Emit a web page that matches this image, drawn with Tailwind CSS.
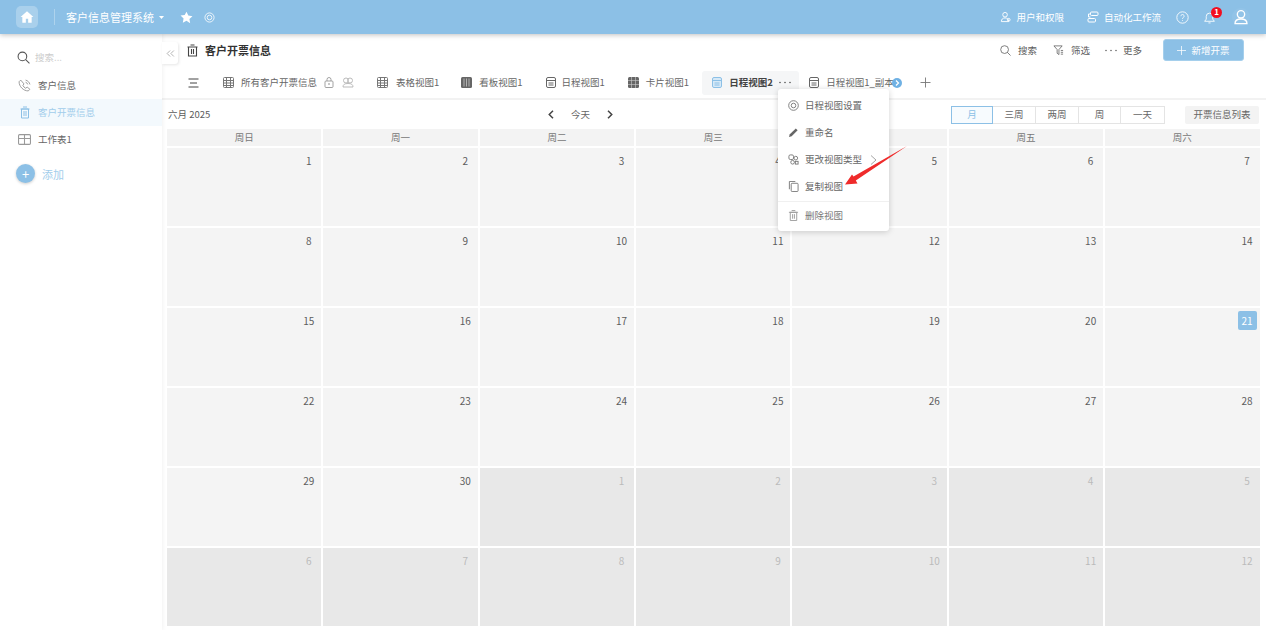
<!DOCTYPE html>
<html lang="zh-CN">
<head>
<meta charset="UTF-8">
<title>客户开票信息</title>
<script src="https://cdn.jsdelivr.net/npm/@tailwindcss/browser@4"></script>
</head>
<body class="h-[630px] w-[1266px] overflow-hidden whitespace-nowrap bg-white font-['Noto_Sans_CJK_SC','Noto_Sans',sans-serif] text-[9.5px] text-[#5c5c5c]">

<!-- Top bar -->
<header class="relative z-20 flex h-[34px] items-center justify-between bg-[#8cc0e6] text-white shadow-[0_1px_5px_rgba(0,0,0,0.25)]">
  <div class="flex items-center pl-4">
    <div class="flex h-[22px] w-[22px] items-center justify-center rounded-[5px] bg-white/25">
      <svg class="h-[14px] w-[14px]" viewBox="0 0 24 24" fill="white"><path d="M12 2 1 12h3v10h6v-7h4v7h6V12h3z"/></svg>
    </div>
    <div class="ml-[16px] mr-[11px] h-4 w-px bg-white/30"></div>
    <span class="text-[11px]">客户信息管理系统</span>
    <svg class="ml-[5px] h-[3px] w-[5px]" viewBox="0 0 10 6" fill="white"><path d="M0 0h10L5 6z"/></svg>
    <svg class="ml-[16px] h-[13px] w-[13px]" viewBox="0 0 24 24" fill="white"><path d="m12 1.500 3.300 7 7.700 1-5.600 5.300 1.400 7.700L12 18l-6.800 3.500 1.400-7.700L1 8.500l7.700-1z"/></svg>
    <svg class="ml-[11px] h-[11px] w-[11px]" viewBox="0 0 24 24" fill="none" stroke="white" stroke-width="2" opacity=".9"><circle cx="12" cy="12" r="10"/><circle cx="12" cy="12" r="5"/></svg>
  </div>
  <div class="flex items-center pr-[16px]">
    <svg class="h-[12px] w-[11px]" viewBox="0 0 24 24" fill="none" stroke="white" stroke-width="2"><circle cx="11" cy="7" r="5"/><path d="M3 22c0-5 3-8 8-8s8 3 8 8z"/><circle cx="19" cy="18" r="3"/></svg>
    <span class="ml-[5px]">用户和权限</span>
    <svg class="ml-[23px] h-[12px] w-[12px]" viewBox="0 0 24 24" fill="none" stroke="white" stroke-width="2"><rect x="7" y="2" width="15" height="7" rx="2"/><rect x="2" y="15" width="15" height="7" rx="2"/><path d="M7 6H3v6h4"/></svg>
    <span class="ml-[5px]">自动化工作流</span>
    <svg class="ml-[15px] h-[13px] w-[13px]" viewBox="0 0 24 24" fill="none" stroke="white" stroke-width="1.600"><circle cx="12" cy="12" r="10.500"/><path d="M9 9.500a3 3 0 1 1 4.500 2.600c-1 .6-1.500 1.200-1.500 2.400M12 17v1.500"/></svg>
    <div class="relative ml-[14px] h-[13px] w-[13px]">
      <svg class="h-[13px] w-[13px]" viewBox="0 0 24 24" fill="none" stroke="white" stroke-width="1.600"><path d="M3 19h18l-3-4V10a6 6 0 0 0-12 0v5zM10 22h4"/></svg>
      <span class="absolute -top-[4px] left-[8px] flex h-[11px] w-[11px] items-center justify-center rounded-full bg-[#f20d1f] text-[8px] font-bold leading-none">1</span>
    </div>
    <div class="ml-[16px] flex h-[18px] w-[18px] items-center justify-center rounded-full bg-white/5">
      <svg class="h-[16px] w-[16px]" viewBox="0 0 24 24" fill="none" stroke="white" stroke-width="2"><circle cx="12" cy="8" r="5.500"/><path d="M3 22c0-5 3-7 9-7s9 2 9 7z"/></svg>
    </div>
  </div>
</header>

<div class="flex h-[596px]">
  <!-- Sidebar -->
  <aside class="relative z-10 w-[162px] shrink-0 bg-white shadow-[0_0_5px_rgba(0,0,0,0.08)]">
    <div class="flex h-[38px] items-center pl-[17px] pt-[8px]">
      <svg class="h-[13px] w-[13px]" viewBox="0 0 24 24" fill="none" stroke="#555" stroke-width="2"><circle cx="10" cy="10" r="8"/><path d="m16 16 7 7"/></svg>
      <span class="ml-[5px] text-[#ccc]">搜索...</span>
    </div>
    <div class="flex h-[27px] items-center pl-[18px] text-[#666]">
      <svg class="h-[13px] w-[13px]" viewBox="0 0 24 24" fill="none" stroke="#888" stroke-width="1.500"><path d="M5 2 2 5c0 9 8 17 17 17l3-3-5-4-3 2c-2-1-4-3-5-5l2-3zM14 2c4 1 7 4 8 8M14 6c2 .5 3.500 2 4 4"/></svg>
      <span class="ml-[7px]">客户信息</span>
    </div>
    <div class="flex h-[27px] items-center bg-[#f3f9fd] pl-[19px] text-[#a2cdeb]">
      <svg class="h-[13px] w-[12px]" viewBox="0 0 24 24" fill="none" stroke="#8cc0e6" stroke-width="2"><path d="M3 5h18M8 1h8M5 5h14v18H5zM10 9v10M14 9v10"/></svg>
      <span class="ml-[7px]">客户开票信息</span>
    </div>
    <div class="flex h-[27px] items-center pl-[18px] text-[#666]">
      <svg class="h-[13px] w-[13px]" viewBox="0 0 24 24" fill="none" stroke="#999" stroke-width="2"><rect x="1" y="3" width="22" height="18" rx="2"/><path d="M1 10h22M12 3v18"/></svg>
      <span class="ml-[7px]">工作表1</span>
    </div>
    <div class="mt-[11px] flex items-center pl-[16px]">
      <div class="flex h-[19px] w-[19px] items-center justify-center rounded-full bg-[#8cc0e6] text-[13px] leading-none text-white shadow-[0_1px_3px_rgba(0,0,0,0.2)]">+</div>
      <span class="ml-[7px] pt-[1px] text-[11px] text-[#a2cdeb]">添加</span>
    </div>
    <button class="absolute -right-[16px] top-[8px] flex h-[22px] w-[16px] items-center justify-center rounded-r-[3px] bg-white text-[#999] shadow-[1px_1px_3px_rgba(0,0,0,0.1)]">
      <svg class="h-[9px] w-[9px]" viewBox="0 0 24 24" fill="none" stroke="#999" stroke-width="2"><path d="m11 4-8 8 8 8M21 4l-8 8 8 8"/></svg>
    </button>
  </aside>

  <main class="relative min-w-0 flex-1">
    <!-- Title row -->
    <div class="flex h-[32px] items-center justify-between pl-[25px] pr-[22px]">
      <div class="flex items-center">
        <svg class="h-[13px] w-[11px]" viewBox="0 0 22 24" fill="none" stroke="#444" stroke-width="2.200"><path d="M1 5h20M7 1h8M3 5h16v18H3zM9 9v10M13 9v10"/></svg>
        <span class="ml-[7px] text-[11px] font-bold text-[#333]">客户开票信息</span>
      </div>
      <div class="flex items-center">
        <svg class="h-[11px] w-[11px]" viewBox="0 0 24 24" fill="none" stroke="#666" stroke-width="1.800"><circle cx="10" cy="10" r="8.500"/><path d="m16 16 7 7"/></svg>
        <span class="ml-[7px]">搜索</span>
        <svg class="ml-[16px] h-[12px] w-[11px]" viewBox="0 0 24 24" fill="none" stroke="#666" stroke-width="1.800"><path d="M2 3h18l-7 8v11l-4-3v-8zM17 13h5M17 17h5M17 21h5"/></svg>
        <span class="ml-[7px]">筛选</span>
        <svg class="ml-[15px] h-[3px] w-[12px]" viewBox="0 0 12 3" fill="#666"><circle cx="1" cy="1.500" r=".8"/><circle cx="6" cy="1.500" r=".8"/><circle cx="11" cy="1.500" r=".8"/></svg>
        <span class="ml-[6px]">更多</span>
        <button class="ml-[21px] flex h-[22px] w-[81px] items-center justify-center rounded-[3px] border border-[#a5cfec] bg-[#8cc0e6] text-white">
          <svg class="h-[9px] w-[9px]" viewBox="0 0 18 18" stroke="white" stroke-width="1.500"><path d="M9 0v18M0 9h18"/></svg><span class="ml-[5px]">新增开票</span>
        </button>
      </div>
    </div>

    <!-- View tabs -->
    <div class="relative flex h-[34px] items-center border-b-2 border-[#f2f2f2] pl-[26px] pt-[1px] text-[#666]">
      <svg class="h-[10px] w-[11px]" viewBox="0 0 22 20" fill="none" stroke="#444" stroke-width="2"><path d="M1 2h20M4 10h14M1 18h20"/></svg>
      <svg class="ml-[24px] h-[11px] w-[11px]" viewBox="0 0 22 22" fill="none" stroke="#777" stroke-width="2"><rect x="1" y="1" width="20" height="20" rx="2"/><path d="M1 7h20M1 12h20M1 17h20M7 1v20M15 1v20"/></svg>
      <span class="ml-[7px]">所有客户开票信息</span>
      <svg class="ml-[7px] h-[11px] w-[10px]" viewBox="0 0 20 22" fill="none" stroke="#999" stroke-width="1.800"><rect x="2" y="8" width="16" height="13" rx="2"/><path d="M6 8V5a4 4 0 0 1 8 0v3"/><circle cx="10" cy="14" r="1"/></svg>
      <svg class="ml-[8px] h-[11px] w-[12px]" viewBox="0 0 24 22" fill="none" stroke="#bbb" stroke-width="2"><circle cx="8" cy="7" r="5"/><circle cx="16" cy="7" r="5"/><path d="M2 20c0-5 3-7 10-7s10 2 10 7z"/></svg>
      <svg class="ml-[23px] h-[11px] w-[11px]" viewBox="0 0 22 22" fill="none" stroke="#777" stroke-width="2"><rect x="1" y="1" width="20" height="20" rx="2"/><path d="M1 7h20M1 12h20M1 17h20M7 1v20M15 1v20"/></svg>
      <span class="ml-[8px]">表格视图1</span>
      <svg class="ml-[22px] h-[11px] w-[11px]" viewBox="0 0 22 22"><rect width="22" height="22" rx="3" fill="#666"/><path d="M6 3v16M11 3v16M16 3v16" stroke="#ccc" stroke-width="1.500"/></svg>
      <span class="ml-[7px]">看板视图1</span>
      <svg class="ml-[23px] h-[11px] w-[10px]" viewBox="0 0 20 22" fill="none" stroke="#666" stroke-width="2"><rect x="1" y="1" width="18" height="20" rx="3"/><path d="M1 7h18M5 12h10M5 16h10"/></svg>
      <span class="ml-[6px]">日程视图1</span>
      <svg class="ml-[23px] h-[11px] w-[11px]" viewBox="0 0 22 22"><rect width="22" height="22" rx="3" fill="#666"/><path d="M7 0v22M15 0v22M0 7h22M0 15h22" stroke="#ccc" stroke-width="1.200"/></svg>
      <span class="ml-[7px]">卡片视图1</span>
      <div class="ml-[13px] flex h-[24px] w-[97px] shrink-0 items-center rounded-[3px] bg-[#f5f6f7] pl-[10px]">
        <svg class="h-[11px] w-[10px] shrink-0" viewBox="0 0 20 22" fill="#d6e9f7" stroke="#8cc0e6" stroke-width="2"><rect x="1" y="1" width="18" height="20" rx="3"/><path d="M1 7h18M5 12h10M5 16h10"/></svg>
        <span class="ml-[7px] font-bold text-[#444]">日程视图2</span>
        <svg class="ml-[6px] h-[3px] w-[12px]" viewBox="0 0 12 3" fill="#555"><circle cx="1" cy="1.500" r=".8"/><circle cx="6" cy="1.500" r=".8"/><circle cx="11" cy="1.500" r=".8"/></svg>
      </div>
      <svg class="ml-[10px] h-[11px] w-[10px]" viewBox="0 0 20 22" fill="none" stroke="#666" stroke-width="2"><rect x="1" y="1" width="18" height="20" rx="3"/><path d="M1 7h18M5 12h10M5 16h10"/></svg>
      <span class="ml-[7px]">日程视图1_副本</span>
      <span class="relative -ml-[2px] flex h-[10px] w-[10px] items-center justify-center rounded-full bg-[#6fb1e4]">
        <svg class="h-[6px] w-[6px]" viewBox="0 0 12 12" fill="none" stroke="white" stroke-width="2.500"><path d="m4 1 5 5-5 5"/></svg>
      </span>
      <svg class="ml-[18px] h-[11px] w-[11px]" viewBox="0 0 22 22" stroke="#777" stroke-width="1.800"><path d="M11 1v20M1 11h20"/></svg>
    </div>

    <!-- Calendar toolbar -->
    <div class="flex h-[29px] items-center pl-[6px] pr-[7px]">
      <span class="w-[379px] shrink-0">六月 2025</span>
      <div class="flex items-center">
        <svg class="h-[9px] w-[9px]" viewBox="0 0 12 12" fill="none" stroke="#444" stroke-width="2"><path d="M8 1 3 6l5 5"/></svg>
        <span class="mx-[15px] text-[#666]">今天</span>
        <svg class="h-[9px] w-[9px]" viewBox="0 0 12 12" fill="none" stroke="#444" stroke-width="2"><path d="m4 1 5 5-5 5"/></svg>
      </div>
      <div class="ml-auto flex items-center">
        <div class="flex h-[18px] text-[#666]">
          <span class="flex w-[42px] items-center justify-center border border-[#8cc0e6] bg-[#f7fbfe] text-[#8cc0e6]">月</span>
          <span class="flex w-[43px] items-center justify-center border border-l-0 border-[#e4e4e4]">三周</span>
          <span class="flex w-[43px] items-center justify-center border border-l-0 border-[#e4e4e4]">两周</span>
          <span class="flex w-[42px] items-center justify-center border border-l-0 border-[#e4e4e4]">周</span>
          <span class="flex w-[44px] items-center justify-center border border-l-0 border-[#e4e4e4]">一天</span>
        </div>
        <span class="ml-[20px] flex h-[18px] w-[74px] items-center justify-center rounded-[2px] bg-[#f3f3f3] text-[#666]">开票信息列表</span>
      </div>
    </div>

    <!-- Calendar grid, filled in by the script below -->
    <div id="calendar" class="grid grid-cols-7 gap-[2px] pl-[5px] pr-[6.500px] text-[10px]"></div>

    <!-- View dropdown menu -->
    <div class="absolute left-[616px] top-[55px] z-30 w-[111px] rounded-[3px] bg-white pb-[3px] pt-[3px] text-[#666] shadow-[0_1px_6px_rgba(0,0,0,0.18)]">
      <div class="flex h-[27px] items-center pl-[10px]">
        <svg class="h-[11px] w-[11px]" viewBox="0 0 24 24" fill="none" stroke="#777" stroke-width="2"><circle cx="12" cy="12" r="10.500"/><circle cx="12" cy="12" r="5"/></svg>
        <span class="ml-[6px]">日程视图设置</span>
      </div>
      <div class="flex h-[27px] items-center pl-[10px]">
        <svg class="h-[11px] w-[11px]" viewBox="0 0 24 24" fill="#666"><path d="M2 22l2-6L17 3l4 4L8 20z"/></svg>
        <span class="ml-[6px]">重命名</span>
      </div>
      <div class="flex h-[27px] items-center pl-[10px]">
        <svg class="h-[11px] w-[11px]" viewBox="0 0 24 24" fill="none" stroke="#777" stroke-width="2"><rect x="2" y="2" width="10" height="10" rx="3"/><circle cx="17" cy="9" r="4"/><circle cx="10" cy="18" r="4"/><rect x="16" y="16" width="6" height="6"/></svg>
        <span class="ml-[6px]">更改视图类型</span>
        <svg class="ml-[8px] h-[10px] w-[7px]" viewBox="0 0 14 20" fill="none" stroke="#888" stroke-width="1.500"><path d="m2 1 10 9-10 9"/></svg>
      </div>
      <div class="flex h-[27px] items-center pl-[10px]">
        <svg class="h-[11px] w-[11px]" viewBox="0 0 24 24" fill="none" stroke="#777" stroke-width="2"><rect x="7" y="5" width="15" height="18" rx="2"/><path d="M3 18V1h13"/></svg>
        <span class="ml-[6px]">复制视图</span>
      </div>
      <div class="mt-[1px] flex h-[27px] items-center border-t border-[#f0f0f0] pl-[10px] text-[#777]">
        <svg class="h-[11px] w-[11px]" viewBox="0 0 24 24" fill="none" stroke="#999" stroke-width="2"><path d="M2 5h20M8 1h8M5 5h14v18H5zM10 9v10M14 9v10"/></svg>
        <span class="ml-[6px]">删除视图</span>
      </div>
    </div>

    <!-- Annotation arrow -->
    <svg class="absolute left-[680px] top-[110px] z-40 h-[50px] w-[66px]" viewBox="0 0 66 50">
      <path d="M65 2 11.500 32.500 10 30.500 3 40.500 15.500 39.500 13.800 36.500z" fill="#ef2b2b"/>
    </svg>
  </main>
</div>

<script>
  const calendar = document.getElementById('calendar');
  let html = '';
  ['周日', '周一', '周二', '周三', '周四', '周五', '周六'].forEach(day => {
      html += `<div class="flex h-[17px] items-center justify-center bg-[#f3f3f3] text-[9.5px] text-[#777]">${day}</div>`;
  });
  for (let i = 1; i <= 42; i++) {
      const inMonth = i <= 30;
      const day = inMonth ? i : i - 30;
      const cellClass = inMonth ? 'bg-[#f4f4f4]' : 'bg-[#e8e8e8] text-[#bbb]';
      // today gets the blue box
      const dayClass = i === 21 ? 'rounded-[2px] bg-[#8cc0e6] text-white' : '';
      html += `<div class="flex h-[78px] justify-end pr-[3px] pt-[3px] ${cellClass}"><span class="flex h-[19px] w-[19px] items-center justify-center ${dayClass}">${day}</span></div>`;
  }
  calendar.innerHTML = html;
</script>
</body>
</html>
